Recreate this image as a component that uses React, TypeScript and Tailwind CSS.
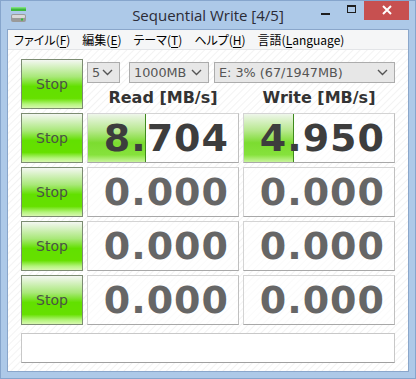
import React from "react";

const ui = "font-['DejaVu_Sans',sans-serif]";

function Chevron() {
  return (
    <svg width="11" height="7" viewBox="0 0 11 7" className="shrink-0">
      <path d="M1 1l4.5 4.5L10 1" fill="none" stroke="#555" strokeWidth="1.4" />
    </svg>
  );
}

function Combo({ label, className }: { label: string; className: string }) {
  return (
    <div
      className={`flex items-center justify-between h-[21px] pl-[4px] pr-[6px] border border-[#acacac] bg-[#e7e7e7] text-[#555] text-[12.8px] ${ui} ${className}`}
    >
      <span>{label}</span>
      <Chevron />
    </div>
  );
}

function StopButton() {
  return (
    <button className="h-[50px] w-[62px] border border-[#7c8c72] bg-[linear-gradient(to_bottom,#f4f7f2_0%,#a8e878_35%,#62e000_55%,#66e000_80%,#b4f47c_92%,#d8f8b0_100%)] flex items-center justify-center text-[14px] text-[#4a5444] font-['DejaVu_Sans',sans-serif]">
      Stop
    </button>
  );
}

function ValueBox({ value, bar, active }: { value: string; bar: number; active: boolean }) {
  return (
    <div className="relative h-[50px] border border-[#d4d4d4] border-b-[#a8a8a8] border-r-[#c0c0c0] bg-white/60 flex items-center justify-end pr-[9px]">
      {bar > 0 && (
        <div
          className="absolute left-0 top-0 bottom-0 border-r border-[#3e8a1c] bg-[linear-gradient(to_bottom,#eef6ea_0%,#b6e88c_35%,#7cdc30_60%,#86e23c_85%,#c8f49c_100%)]"
          style={{ width: bar }}
        />
      )}
      <span
        className={`relative font-bold text-[38px] leading-none tracking-[1px] ${ui} ${active ? "text-[#3d3d3d]" : "text-[#666]"}`}
      >
        {value}
      </span>
    </div>
  );
}

function U({ children }: { children: React.ReactNode }) {
  return <span className="underline underline-offset-2">{children}</span>;
}

export default function App() {
  const rows = [
    { read: "0.000", write: "0.000" },
    { read: "0.000", write: "0.000" },
    { read: "0.000", write: "0.000" },
  ];

  return (
    <div className="w-[416px] h-[379px] bg-[#adc9e8] border border-[#86a5cc] flex flex-col overflow-hidden">
      {/* Title bar */}
      <div className="h-[28px] grid grid-cols-[1fr_auto_1fr] items-start">
        <div className="pl-[9px] pt-[5px]">
          <svg width="17" height="17" viewBox="0 0 17 17">
            <rect x="1" y="1" width="15" height="4" fill="#3cb83c" />
            <rect x="1" y="1" width="15" height="1.5" fill="#7ee07e" />
            <rect x="1" y="8" width="15" height="8" rx="2" fill="#9a9a9a" />
            <rect x="2" y="9" width="13" height="3" rx="1" fill="#d8d8d8" />
            <rect x="11" y="12.5" width="2" height="2" fill="#30c030" />
          </svg>
        </div>
        <div className="pt-[3px] text-[15px] text-[#2b2b36] font-['Open_Sans',sans-serif] whitespace-nowrap">
          Sequential Write [4/5]
        </div>
        <div className="flex justify-end items-start">
          <div className="w-[26px] h-[20px] flex items-center justify-center">
            <div className="w-[9px] h-[2px] bg-[#1e1e1e] mt-[5px]" />
          </div>
          <div className="w-[26px] h-[20px] flex items-center justify-center">
            <div className="w-[9px] h-[8px] border border-[#1e1e1e] border-t-2 -mt-[4px]" />
          </div>
          <div className="w-[45px] h-[20px] -mt-px mr-[6px] bg-[#c75050] flex items-center justify-center">
            <svg width="10" height="10" viewBox="0 0 10 10">
              <path d="M1 1l8 8M9 1l-8 8" stroke="#fff" strokeWidth="2" />
            </svg>
          </div>
        </div>
      </div>

      {/* Window body */}
      <div className="mx-[6px] border border-[#8aa6ca] flex flex-col">
        {/* Menu */}
        <div className="h-[20px] bg-[#f5f6f7] border-b border-[#e3e5e8] flex items-center gap-[12px] pl-[6px] text-[12px] text-black font-['Noto_Sans_CJK_JP',sans-serif] [font-feature-settings:'palt']">
          <span>ファイル(<U>F</U>)</span>
          <span>編集(<U>E</U>)</span>
          <span>テーマ(<U>T</U>)</span>
          <span>ヘルプ(<U>H</U>)</span>
          <span>言語(<U>L</U>anguage)</span>
        </div>

        {/* Client */}
        <div className="h-[321px] bg-[repeating-linear-gradient(135deg,#ffffff_0px,#ffffff_3px,#f3f3f3_4px,#ffffff_5px)] pt-[9px] pl-[13px] pr-[11px] flex flex-col">
          <div className="grid grid-cols-[62px_152px_152px] gap-x-[4px] gap-y-[4px]">
            <StopButton />
            <div className="col-span-2 flex flex-col">
              <div className="flex mt-[3px]">
                <Combo label="5" className="w-[33px]" />
                <Combo label="1000MB" className="w-[80px] ml-[9px]" />
                <Combo label="E: 3% (67/1947MB)" className="w-[181px] ml-[5px]" />
              </div>
              <div className={`grid grid-cols-2 gap-[4px] mt-[4px] text-[16px] font-bold text-[#333] leading-[22px] ${ui}`}>
                <div className="text-center">Read [MB/s]</div>
                <div className="text-center">Write [MB/s]</div>
              </div>
            </div>

            <StopButton />
            <ValueBox value="8.704" bar={58} active />
            <ValueBox value="4.950" bar={50} active />

            {rows.map((r, i) => (
              <React.Fragment key={i}>
                <StopButton />
                <ValueBox value={r.read} bar={0} active={false} />
                <ValueBox value={r.write} bar={0} active={false} />
              </React.Fragment>
            ))}
          </div>

          <div className="mt-[8px] h-[30px] w-[374px] border border-[#c8c8c8] border-b-[#a0a0a0] bg-white" />
        </div>
      </div>
    </div>
  );
}
